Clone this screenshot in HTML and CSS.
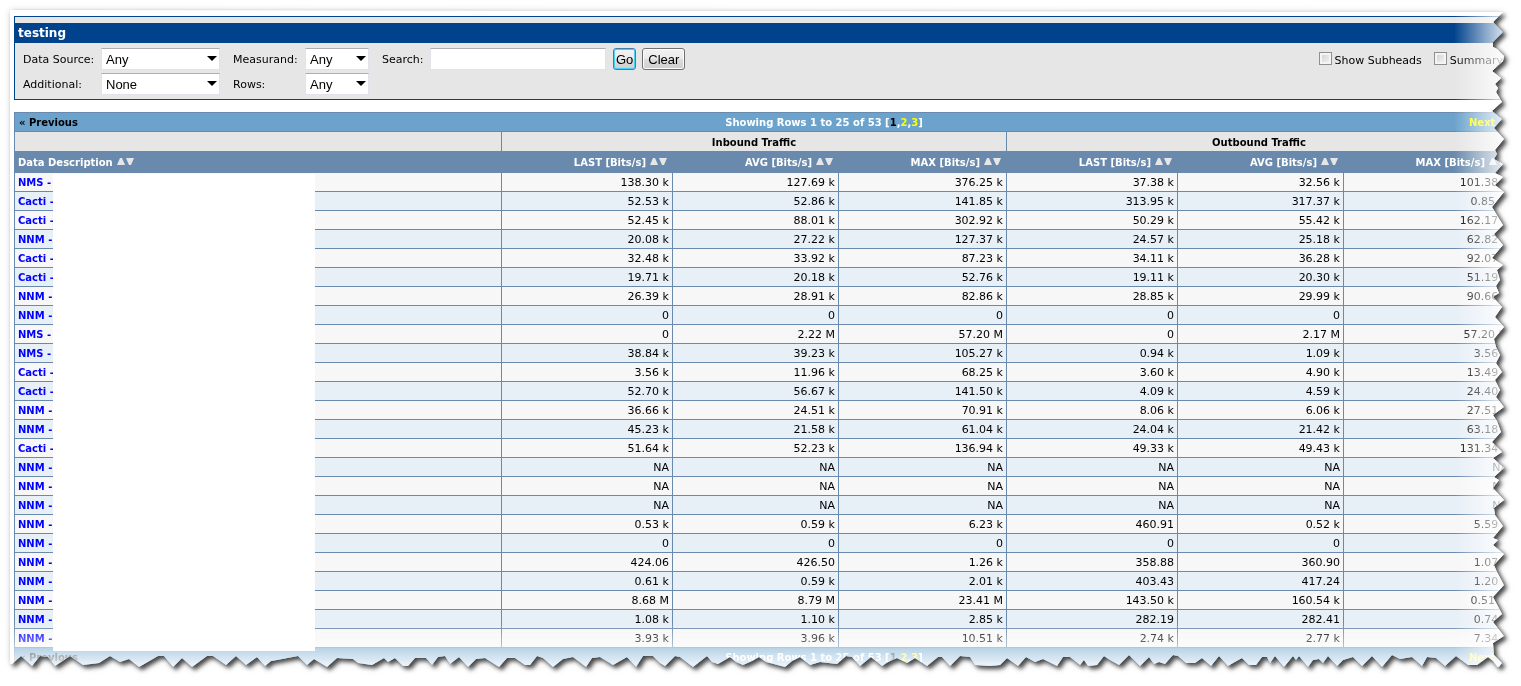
FILE: index.html
```html
<!DOCTYPE html>
<html lang="en">
<head>
<meta charset="utf-8">
<title>testing</title>
<link rel="stylesheet" href="styles.css">
</head>
<body>
<div class="shadow">
  <main class="sheet" id="sheet">
    <section class="filter">
      <h1 class="filter-title">testing</h1>
      <form class="filter-form">
        <label for="source">Data Source:</label>
        <span class="pick"><select id="source"><option>Any</option></select></span>
        <label for="measurand">Measurand:</label>
        <span class="pick"><select id="measurand"><option>Any</option></select></span>
        <label for="search">Search:</label>
        <input class="search" id="search" type="text">
        <div class="buttons">
          <button class="btn btn-go" type="submit">Go</button>
          <button class="btn" type="reset">Clear</button>
        </div>
        <div class="checks">
          <label class="check"><input type="checkbox">Show Subheads</label>
          <label class="check"><input type="checkbox">Summary</label>
        </div>
        <label for="additional">Additional:</label>
        <span class="pick"><select id="additional"><option>None</option></select></span>
        <label for="rows">Rows:</label>
        <span class="pick"><select id="rows"><option>Any</option></select></span>
      </form>
    </section>

    <section class="report">
      <nav class="pager">
        <span class="prev">« Previous</span>
        <span class="range">Showing Rows 1 to 25 of 53 [<b>1</b>,<a href="#2">2</a>,<a href="#3">3</a>]</span>
        <a href="#next">Next »</a>
      </nav>
      <div class="listing">
        <table>
          <colgroup>
            <col><col class="last"><col class="avg"><col class="max"><col class="last"><col class="avg"><col class="max">
          </colgroup>
          <thead>
            <tr class="groups"><th></th><th colspan="3">Inbound Traffic</th><th colspan="3">Outbound Traffic</th></tr>
            <tr class="heads">
              <th>Data Description</th>
              <th>LAST [Bits/s]</th><th>AVG [Bits/s]</th><th>MAX [Bits/s]</th>
              <th>LAST [Bits/s]</th><th>AVG [Bits/s]</th><th>MAX [Bits/s]</th>
            </tr>
          </thead>
          <tbody id="data"></tbody>
        </table>
        <div class="redacted"></div>
      </div>
      <nav class="pager">
        <span class="prev">« Previous</span>
        <span class="range">Showing Rows 1 to 25 of 53 [<b>1</b>,<a href="#2">2</a>,<a href="#3">3</a>]</span>
        <a href="#next">Next »</a>
      </nav>
    </section>
    <div class="fade fade-right"></div>
    <div class="fade fade-bottom"></div>
  </main>
</div>
<script src="script.js"></script>
</body>
</html>
```
FILE: styles.css
```css
* { box-sizing: border-box; }

body {
  margin: 0;
  background: #fff;
  color: #000;
  font: 11px/18px "DejaVu Sans", Verdana, sans-serif;
}

a { text-decoration: none; }

.shadow {
  padding: 10px 17px 16px 10px;
  filter: drop-shadow(0 0 3px rgba(0, 0, 0, 0.15)) drop-shadow(3px 3px 2px rgba(0, 0, 0, 0.7));
}

.sheet {
  position: relative;
  padding: 6px 0 0 4px;
  overflow: hidden;
  background: #fff;
}

/* The capture is wider than the torn paper around it. */
.filter, .report { margin-right: -8px; }

.filter {
  padding-top: 6px;
  border: 1px solid #00438c;
  background: #e6e6e6;
}

.filter-title {
  margin: 0;
  padding: 1px 3px 0;
  background: #00438c;
  color: #fff;
  font-size: 12px;
  line-height: 19px;
}

.filter-form {
  display: grid;
  grid-template-columns: 78px 132px 72px 77px 48px 183px auto 1fr;
  row-gap: 3px;
  align-items: center;
  padding: 5px 8px 4px;
}

.filter-form > label { padding-top: 2px; }

.pick {
  position: relative;
  height: 22px;
  margin-right: 13px;
}

.pick::after {
  content: "";
  position: absolute;
  top: 8px;
  right: 3px;
  border: 5px solid transparent;
  border-top: 5px solid #000;
  border-bottom: 0;
  pointer-events: none;
}

select, .search {
  width: 100%;
  height: 22px;
  padding: 0 4px;
  appearance: none;
  border: 1px solid #e2e3ea;
  border-top-color: #abadb3;
  border-radius: 0;
  background: #fff;
  color: #000;
  font: 13px "Liberation Sans", Arial, sans-serif;
}

.search { width: 176px; }

.buttons {
  display: flex;
  gap: 6px;
}

.btn {
  height: 22px;
  padding: 0 5px;
  border: 1px solid #707070;
  border-radius: 3px;
  background: linear-gradient(#f2f2f2 0, #ebebeb 50%, #dddddd 50%, #cfcfcf);
  box-shadow: inset 0 0 0 1px #fcfcfc;
  color: #000;
  font: 13px "Liberation Sans", Arial, sans-serif;
}

.btn-go {
  padding: 0 2px;
  border-color: #3c7fb1;
  box-shadow: inset 0 0 0 1px #48d0f8;
}

.checks {
  display: flex;
  justify-content: flex-end;
  gap: 12px;
  padding-top: 4px;
}

.check {
  display: flex;
  gap: 3px;
  white-space: nowrap;
}

.check input {
  width: 13px;
  height: 13px;
  margin: 0;
  appearance: none;
  border: 1px solid #8e8f8f;
  background: linear-gradient(135deg, #cbcfd5, #f6f6f6);
  box-shadow: inset 0 0 0 2px #f4f4f4;
}

.report {
  margin-top: 12px;
  border: 1px solid #6a8aad;
  border-bottom: 0;
}

.pager {
  display: grid;
  grid-template-columns: 160px 1fr 42px;
  height: 19px;
  padding: 1px 0 0 4px;
  background: #6ba3cd;
  border-bottom: 1px solid #6a8aad;
  color: #fff;
  font-size: 10px;
  font-weight: bold;
}

.pager a { color: #ff0; }
.pager .prev, .pager b { color: #000; }
.pager .range { text-align: center; }

.listing { position: relative; }

table {
  width: 100%;
  table-layout: fixed;
  border-collapse: separate;
  border-spacing: 0;
}

.last { width: 171px; }
.avg { width: 166px; }
.max { width: 168px; }

th, td {
  height: 19px;
  padding: 1px 3px 0;
  line-height: 17px;
  text-align: right;
  white-space: nowrap;
}

th, td:first-child { font-size: 10px; font-weight: bold; }

th:first-child, td:first-child { text-align: left; }

.groups th {
  background: #e6e6e6;
  text-align: center;
}

.groups th + th, td + td { border-left: 1px solid #6a8aad; }

.heads th {
  height: 22px;
  padding-right: 5px;
  background: #6a8aad;
  color: #fff;
  line-height: 21px;
}

.sort {
  margin-left: 4px;
  fill: #e6e6e6;
}

td {
  border-bottom: 1px solid #6a8aad;
  background: #f7f7f7;
}

tr:nth-child(even) td { background: #e7eff7; }

td a { color: #00f; }

/* Blank patch over the host names. */
.redacted {
  position: absolute;
  z-index: 2;
  top: 42px;
  bottom: -3px;
  left: 38px;
  width: 262px;
  background: #fff;
}

.fade {
  position: absolute;
  right: 0;
  bottom: 0;
  pointer-events: none;
}

.fade-right {
  top: 0;
  width: 50px;
  background: linear-gradient(to right, rgba(255, 255, 255, 0), rgba(255, 255, 255, 0.85));
}

.fade-bottom {
  left: 0;
  height: 45px;
  background: linear-gradient(rgba(255, 255, 255, 0), rgba(255, 255, 255, 0.9));
}
```
FILE: script.js
```js
const rows = `NMS|138.30 k|127.69 k|376.25 k|37.38 k|32.56 k|101.38 k
Cacti|52.53 k|52.86 k|141.85 k|313.95 k|317.37 k|0.85 M
Cacti|52.45 k|88.01 k|302.92 k|50.29 k|55.42 k|162.17 k
NNM|20.08 k|27.22 k|127.37 k|24.57 k|25.18 k|62.82 k
Cacti|32.48 k|33.92 k|87.23 k|34.11 k|36.28 k|92.07 k
Cacti|19.71 k|20.18 k|52.76 k|19.11 k|20.30 k|51.19 k
NNM|26.39 k|28.91 k|82.86 k|28.85 k|29.99 k|90.66 k
NNM|0|0|0|0|0|0
NMS|0|2.22 M|57.20 M|0|2.17 M|57.20 M
NMS|38.84 k|39.23 k|105.27 k|0.94 k|1.09 k|3.56 k
Cacti|3.56 k|11.96 k|68.25 k|3.60 k|4.90 k|13.49 k
Cacti|52.70 k|56.67 k|141.50 k|4.09 k|4.59 k|24.40 k
NNM|36.66 k|24.51 k|70.91 k|8.06 k|6.06 k|27.51 k
NNM|45.23 k|21.58 k|61.04 k|24.04 k|21.42 k|63.18 k
Cacti|51.64 k|52.23 k|136.94 k|49.33 k|49.43 k|131.34 k
NNM|NA|NA|NA|NA|NA|NA
NNM|NA|NA|NA|NA|NA|NA
NNM|NA|NA|NA|NA|NA|NA
NNM|0.53 k|0.59 k|6.23 k|460.91|0.52 k|5.59 k
NNM|0|0|0|0|0|0
NNM|424.06|426.50|1.26 k|358.88|360.90|1.07 k
NNM|0.61 k|0.59 k|2.01 k|403.43|417.24|1.20 k
NNM|8.68 M|8.79 M|23.41 M|143.50 k|160.54 k|0.51 M
NNM|1.08 k|1.10 k|2.85 k|282.19|282.41|0.74 k
NNM|3.93 k|3.96 k|10.51 k|2.74 k|2.77 k|7.34 k`;

document.getElementById('data').innerHTML = rows.split('\n').map(line => {
  const [name, ...values] = line.split('|');
  return `<tr><td><a href="#graph">${name} -</a></td>${values.map(v => `<td>${v}</td>`).join('')}</tr>`;
}).join('');

document.querySelectorAll('.heads th').forEach(th => {
  th.insertAdjacentHTML('beforeend',
    '<svg class="sort" width="17" height="8" viewBox="0 0 17 8"><path d="M0 7 3 0h2l3 7zM9 0h8l-3 7h-2z"/></svg>');
});

// Torn right edge: depth of the tear and distance down the sheet.
const right = [[1,2],[5,6],[11,12],[1,22],[11,32],[11,37],[7,39],[0,46],[1,51],[12,61],[3,68],[9,74],[6,78],[8,82],[2,92],[12,101],[2,109],[10,118],[0,129],[9,140],[7,144],[10,149],[1,154],[9,163],[1,167],[9,175],[0,182],[12,197],[1,215],[10,224],[1,235],[12,248],[1,255],[7,260],[4,270],[8,276],[5,283],[11,287],[2,297],[9,307],[0,317],[10,329],[8,337],[4,345],[8,353],[2,362],[9,370],[4,380],[8,387],[0,397],[11,405],[7,411],[3,422],[12,432],[2,442],[11,448],[0,458],[10,467],[5,470],[11,478],[0,490],[10,498],[9,505],[1,516],[11,528],[6,530],[11,535],[0,544],[10,555],[7,562],[0,575],[11,587],[2,604],[11,612],[0,626],[11,633],[10,645],[2,653],[6,658]];

// Torn bottom edge: distance along the sheet and depth of the tear.
const bottom = [[2,3],[11,11],[22,1],[30,11],[38,10],[45,1],[60,11],[73,2],[89,4],[100,11],[110,5],[119,8],[129,0],[148,11],[154,11],[163,0],[172,9],[182,0],[197,11],[203,11],[216,2],[226,11],[236,2],[247,10],[255,1],[261,6],[267,7],[288,11],[297,2],[304,8],[317,0],[327,9],[343,8],[348,4],[362,2],[374,9],[378,5],[385,9],[393,1],[398,1],[405,9],[416,9],[422,2],[428,10],[435,11],[440,3],[449,10],[458,0],[466,8],[475,9],[489,0],[497,9],[505,9],[515,2],[520,2],[527,11],[533,9],[543,0],[553,8],[563,10],[576,0],[582,9],[590,10],[603,2],[617,10],[626,0],[633,11],[643,11],[650,4],[655,1],[665,11],[670,10],[683,0],[697,11],[702,5],[708,3],[720,10],[726,5],[733,2],[742,6],[749,10],[756,5],[775,0],[782,6],[790,10],[800,2],[810,5],[827,3],[836,11],[842,10],[850,1],[861,10],[866,6],[872,1],[878,5],[887,9],[897,4],[905,9],[917,1],[928,10],[932,10],[940,1],[950,11],[960,10],[965,2],[980,1],[990,2],[997,9],[1008,1],[1016,10],[1025,5],[1033,8],[1047,1],[1053,10],[1060,10],[1070,2],[1074,7],[1078,1],[1087,2],[1094,11],[1100,7],[1109,2],[1119,12],[1130,1],[1139,10],[1144,3],[1149,5],[1155,3],[1163,12],[1168,11],[1176,4],[1185,4],[1192,9],[1201,1],[1209,11],[1218,1],[1223,4],[1232,9],[1239,2],[1246,2],[1252,10],[1257,10],[1260,4],[1265,11],[1274,0],[1283,11],[1286,7],[1289,11],[1298,0],[1303,7],[1309,8],[1313,4],[1318,11],[1327,1],[1333,7],[1343,10],[1352,1],[1362,11],[1372,0],[1382,12],[1390,8],[1402,10],[1412,1],[1417,10],[1426,9],[1435,1],[1446,11],[1458,2],[1467,2],[1478,10],[1483,6]];

document.getElementById('sheet').style.clipPath = 'polygon(0 0,' +
  right.map(([d, y]) => `calc(100% - ${d}px) ${y}px`).join() + ',' +
  bottom.slice().reverse().map(([x, d]) => `${x}px calc(100% - ${d}px)`).join() +
  ',0 calc(100% - 3px))';
```
